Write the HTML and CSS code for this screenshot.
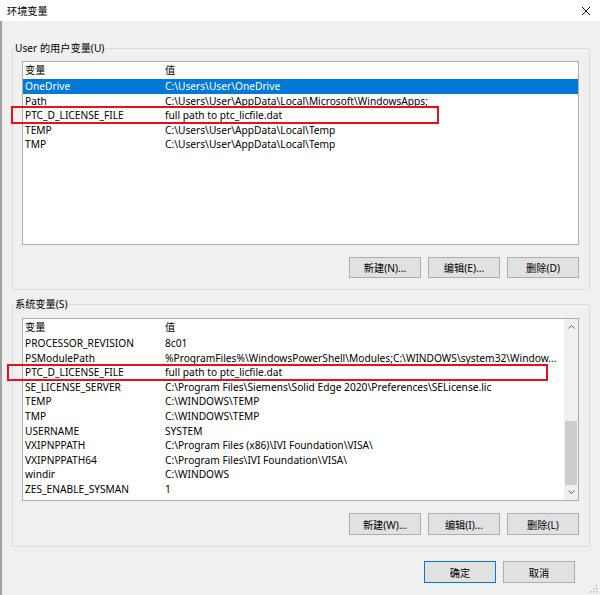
FILE: index.html
```html
<!DOCTYPE html>
<html lang="zh-CN">
<head>
    <meta charset="UTF-8">
    <title>环境变量</title>
    <link rel="stylesheet" href="styles.css">
</head>
<body>
    <div class="titlebar">
        <span class="title">环境变量</span>
        <svg class="close" width="10" height="10" viewBox="0 0 10 10">
            <path d="M1 1 L9 9 M9 1 L1 9" stroke="#111" stroke-width="1" fill="none"/>
        </svg>
    </div>

    <div class="content">
        <fieldset class="group group-user">
            <legend>User 的用户变量(U)</legend>
            <div class="list list-user">
                <div class="rows">
                    <div class="row head"><span class="c1">变量</span><span class="c2">值</span></div>
                    <div class="row selected"><span class="c1">OneDrive</span><span class="c2">C:\Users\User\OneDrive</span></div>
                    <div class="row"><span class="c1">Path</span><span class="c2">C:\Users\User\AppData\Local\Microsoft\WindowsApps;</span></div>
                    <div class="row marked"><span class="c1">PTC_D_LICENSE_FILE</span><span class="c2">full path to ptc_licfile.dat</span><span class="mark mark-user"></span></div>
                    <div class="row"><span class="c1">TEMP</span><span class="c2">C:\Users\User\AppData\Local\Temp</span></div>
                    <div class="row"><span class="c1">TMP</span><span class="c2">C:\Users\User\AppData\Local\Temp</span></div>
                </div>
            </div>
            <div class="actions">
                <button>新建(N)...</button>
                <button>编辑(E)...</button>
                <button>删除(D)</button>
            </div>
        </fieldset>

        <fieldset class="group group-system">
            <legend>系统变量(S)</legend>
            <div class="list list-system">
                <div class="rows">
                    <div class="row head"><span class="c1">变量</span><span class="c2">值</span></div>
                    <div class="row"><span class="c1">PROCESSOR_REVISION</span><span class="c2">8c01</span></div>
                    <div class="row"><span class="c1">PSModulePath</span><span class="c2">%ProgramFiles%\WindowsPowerShell\Modules;C:\WINDOWS\system32\Window...</span></div>
                    <div class="row marked"><span class="c1">PTC_D_LICENSE_FILE</span><span class="c2">full path to ptc_licfile.dat</span><span class="mark mark-system"></span></div>
                    <div class="row"><span class="c1">SE_LICENSE_SERVER</span><span class="c2">C:\Program Files\Siemens\Solid Edge 2020\Preferences\SELicense.lic</span></div>
                    <div class="row"><span class="c1">TEMP</span><span class="c2">C:\WINDOWS\TEMP</span></div>
                    <div class="row"><span class="c1">TMP</span><span class="c2">C:\WINDOWS\TEMP</span></div>
                    <div class="row"><span class="c1">USERNAME</span><span class="c2">SYSTEM</span></div>
                    <div class="row"><span class="c1">VXIPNPPATH</span><span class="c2">C:\Program Files (x86)\IVI Foundation\VISA\</span></div>
                    <div class="row"><span class="c1">VXIPNPPATH64</span><span class="c2">C:\Program Files\IVI Foundation\VISA\</span></div>
                    <div class="row"><span class="c1">windir</span><span class="c2">C:\WINDOWS</span></div>
                    <div class="row"><span class="c1">ZES_ENABLE_SYSMAN</span><span class="c2">1</span></div>
                </div>
                <div class="scrollbar">
                    <div class="arrow">
                        <svg width="7" height="4" viewBox="0 0 7 4"><path d="M0.5 3.5 L3.5 0.5 L6.5 3.5" stroke="#606060" fill="none"/></svg>
                    </div>
                    <div class="track"><div class="thumb"></div></div>
                    <div class="arrow">
                        <svg width="7" height="4" viewBox="0 0 7 4"><path d="M0.5 0.5 L3.5 3.5 L6.5 0.5" stroke="#606060" fill="none"/></svg>
                    </div>
                </div>
            </div>
            <div class="actions">
                <button>新建(W)...</button>
                <button>编辑(I)...</button>
                <button>删除(L)</button>
            </div>
        </fieldset>

        <div class="dialog-actions">
            <button class="default">确定</button>
            <button>取消</button>
        </div>
    </div>

    <svg class="grip" width="8" height="8" viewBox="0 0 8 8">
        <rect x="6" y="0" width="1.5" height="1.5" fill="#b8b8b8"/>
        <rect x="3" y="3" width="1.5" height="1.5" fill="#b8b8b8"/>
        <rect x="6" y="3" width="1.5" height="1.5" fill="#b8b8b8"/>
        <rect x="0" y="6" width="1.5" height="1.5" fill="#b8b8b8"/>
        <rect x="3" y="6" width="1.5" height="1.5" fill="#b8b8b8"/>
        <rect x="6" y="6" width="1.5" height="1.5" fill="#b8b8b8"/>
    </svg>
</body>
</html>
```

FILE: styles.css
```css
* {
    box-sizing: border-box;
    margin: 0;
    padding: 0;
}

body {
    position: relative;
    width: 600px;
    height: 595px;
    overflow: hidden;
    background: #f0f0f0;
    color: #000;
    font-family: "Noto Sans", "Noto Sans CJK SC", sans-serif;
    font-size: 10.2px;
}

.titlebar {
    height: 21px;
    background: #fff;
    display: flex;
    align-items: center;
    justify-content: space-between;
    padding: 0 9px 0 7px;
}

.title {
    font-size: 10.2px;
}

.content {
    height: 574px;
    border-left: 2px solid #a0a0a0;
    padding: 19px 10px 0 10px;
}

/* group boxes */
.group {
    min-width: 0;
    border: 1px solid #dcdcdc;
    padding: 0;
}

.group legend {
    margin-left: 1px;
    padding: 0 1px;
    line-height: 16px;
}

.group-system {
    margin-top: 6px;
}

/* list views */
.list {
    display: flex;
    margin: 5px 10px 0 9px;
    height: 184px;
    background: #fff;
    border: 1px solid #adadad;
}

.list-system {
    margin-top: 6px;
    height: 183px;
}

.rows {
    flex: 1;
    min-width: 0;
}

.row {
    position: relative;
    display: flex;
    height: 14.5px;
    line-height: 14.5px;
    white-space: nowrap;
}

.list-system .row {
    height: 14.6px;
    line-height: 14.6px;
}

.list .row.head {
    height: 17px;
    line-height: 17px;
}

.c1 {
    width: 140px;
    flex: none;
    padding-left: 2px;
}

.c2 {
    flex: 1;
    min-width: 0;
    overflow: hidden;
    padding-left: 2px;
}

.row.selected {
    background: #0078d7;
    color: #fff;
}

/* red annotation frames */
.mark {
    position: absolute;
    border: 2px solid #e8101e;
}

.mark-user {
    left: -12px;
    top: -2px;
    width: 428px;
    height: 18px;
}

.mark-system {
    left: -16px;
    top: -1px;
    width: 541px;
    height: 17px;
}

/* scrollbar */
.scrollbar {
    width: 14px;
    flex: none;
    display: flex;
    flex-direction: column;
    background: #f0f0f0;
}

.arrow {
    height: 17px;
    display: flex;
    align-items: center;
    justify-content: center;
}

.track {
    flex: 1;
    padding: 86px 1px 0 1px;
}

.thumb {
    height: 64px;
    background: #cdcdcd;
}

/* buttons */
.actions {
    display: flex;
    justify-content: flex-end;
    gap: 7px;
    margin: 12px 10px 11px 0;
}

button {
    width: 72px;
    height: 21px;
    background: #e1e1e1;
    border: 1px solid #adadad;
    color: #000;
    font-family: "Noto Sans", "Noto Sans CJK SC", sans-serif;
    font-size: 10.2px;
}

.group-system .actions button {
    height: 22px;
}

.dialog-actions {
    display: flex;
    justify-content: flex-end;
    gap: 7px;
    margin: 14px 15px 0 0;
}

.dialog-actions button {
    height: 22px;
}

button.default {
    border-color: #0078d7;
}

.grip {
    position: absolute;
    right: 2px;
    bottom: 2px;
}
```
